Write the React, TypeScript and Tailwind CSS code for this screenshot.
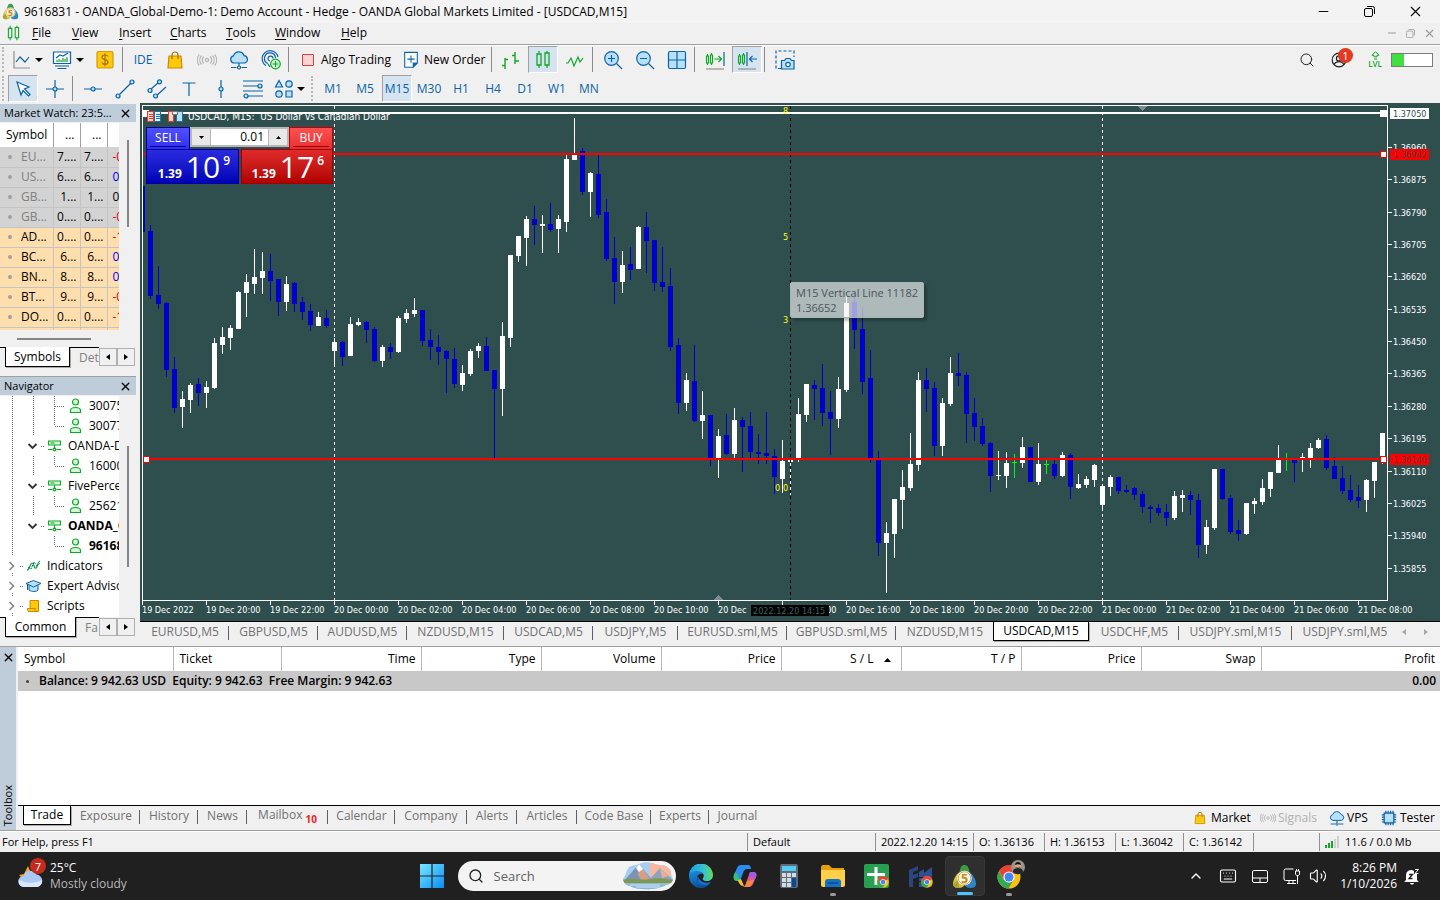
import React from "react";
import { Search, X, Minus, ChevronUp, Keyboard, Volume2 } from "lucide-react";

type Kids = { children?: React.ReactNode };

/* ---------- shared icons ---------- */

const BLUE = "#0a64a4";
const GREEN = "#10a827";

function Ico({ children, size = 20 }: Kids & { size?: number }) {
  return (
    <svg width={size} height={size} viewBox="0 0 20 20" fill="none" stroke={BLUE} strokeWidth="1.2" aria-hidden="true" className="shrink-0">
      {children}
    </svg>
  );
}

function MetaLogo({ size }: { size: number }) {
  return (
    <svg width={size} height={size} viewBox="0 0 24 24" aria-hidden="true" className="shrink-0">
      <path d="M12 1c2.500 0 3.500 1.500 4.200 4l1.300 5h-11l1.300-5C8.500 2.500 9.500 1 12 1z" fill="#3f9a48" />
      <path d="M7 8c-3 2-6 7-6 11 0 3 2 4 5 4 3 0 6-1 6-4V9z" fill="#d8c340" />
      <path d="M17 8c3 2 6 7 6 11 0 3-2 4-5 4-3 0-6-1-6-4V9z" fill="#2f86c5" />
      <path d="M6 15c-2 1-4 3-5 5 1 3 4 3 6 3z" fill="#a9a336" />
      <circle cx="12" cy="13.500" r="7" fill="#fff" />
      <circle cx="12" cy="13.500" r="6" fill="#fdf6e3" stroke="#c9962e" strokeWidth="0.8" />
      <text x="12" y="17.800" textAnchor="middle" fontSize="12" fontWeight="700" fontFamily="Open Sans, sans-serif" fill="#c18a1c">5</text>
    </svg>
  );
}

const BagIcon = ({ size = 20 }: { size?: number }) => (
  <Ico size={size}>
    <path d="M4 6h12l1 12H3z" fill="#ffc90e" stroke="#c98a00" />
    <path d="M7 9V5a3 3 0 0 1 6 0v4" stroke="#a86f00" />
  </Ico>
);
const SignalIcon = ({ size = 20 }: { size?: number }) => (
  <Ico size={size}>
    <g stroke="#b4b4b4">
      <circle cx="10" cy="10" r="1.600" />
      <path d="M6.800 6.500a5 5 0 0 0 0 7M13.200 6.500a5 5 0 0 1 0 7M4.500 5.500a7 7 0 0 0 0 9M15.500 5.500a7 7 0 0 1 0 9M2.300 4.500a9 9 0 0 0 0 11M17.700 4.500a9 9 0 0 1 0 11" />
    </g>
  </Ico>
);
const CloudIcon = ({ size = 20 }: { size?: number }) => (
  <Ico size={size}>
    <path d="M5 13a3.600 3.600 0 0 1-.5-7.100 5.500 5.500 0 0 1 10.500-.2A3.700 3.700 0 0 1 15.500 13z" fill="#b9e0fb" />
    <path d="M10 13v3M2 17.500h5.500M12.500 17.500H18" />
    <circle cx="10" cy="17.500" r="1.500" />
  </Ico>
);
const CandlesIcon = ({ size = 20 }: { size?: number }) => (
  <Ico size={size}>
    <g stroke={GREEN} strokeWidth="1.300">
      <path d="M6 1v3M6 15v3M14 1v2M14 15v3" />
      <path d="M4 4h4v11H4zM12 3h4v12h-4z" />
    </g>
  </Ico>
);

/* ---------- toolbar pieces ---------- */

function Tool({ label, active, children, cls = "w-8" }: Kids & { label: string; active?: boolean; cls?: string }) {
  if (active) {
    return (
      <button type="button" aria-label={label} aria-pressed="true" className="mx-px flex h-[27px] w-[30px] shrink-0 items-center justify-center border border-t-[#a0a0a0] border-r-white border-b-white border-l-[#a0a0a0] bg-[#d6e4f2] text-[#0a64a4]">
        {children}
      </button>
    );
  }
  return (
    <button type="button" aria-label={label} className={`flex h-[27px] shrink-0 items-center justify-center text-[#0a64a4] ${cls}`}>
      {children}
    </button>
  );
}
const Sep = () => <span className="mx-[1px] h-[25px] w-[2px] shrink-0 border-l border-[#8c8c8c]" />;
const Caret = () => (
  <svg width="8" height="4" viewBox="0 0 8 4" aria-hidden="true" className="shrink-0"><path d="M0 0h8L4 4z" fill="#000" /></svg>
);
const Grip = () => <span className="h-[25px] w-[3px] shrink-0 border-l-[2px] border-dotted border-[#b8b8b8]" />;

function ToolbarTop() {
  return (
    <div className="flex h-[29px] items-center pl-[2px]">
      <Grip />
      <Tool label="Chart type" cls="ml-[3px] w-7">
        <Ico><path d="M2 1v17h16" stroke="#909090" /><path d="M4 12l4-5 5 5 4-5" /></Ico>
      </Tool>
      <button type="button" aria-label="Chart type list" className="-ml-px w-2"><Caret /></button>
      <Tool label="Templates" cls="ml-[5px] w-7">
        <Ico>
          <path d="M1.500 2h17v11.500H1.500z" fill="#fff" /><path d="M3 16h14M5.500 18.500h9" />
          <path d="M4 8l4-3 3 1 5-3" /><path d="M5 12v-2M7 12V9M9 12v-2M11 12V8M13 12V9M15 12V7" stroke={GREEN} />
        </Ico>
      </Tool>
      <button type="button" aria-label="Template list" className="w-2"><Caret /></button>
      <Tool label="Trade" cls="ml-[5px] w-8">
        <Ico>
          <rect x="2" y="1.500" width="16" height="16.500" rx="1.500" fill="#ffc90e" stroke="#d49a00" />
          <path d="M13 6.500c-.6-1.200-1.600-1.500-3-1.500-1.800 0-3 .8-3 2.200 0 3.200 6 1.600 6 4.800 0 1.500-1.200 2.300-3 2.300-1.500 0-2.700-.5-3-1.800M10 3.300v13" stroke="#a87400" />
        </Ico>
      </Tool>
      <Sep />
      <Tool label="IDE" cls="ml-[2px] w-8"><span>IDE</span></Tool>
      <Tool label="Market"><BagIcon /></Tool>
      <Tool label="Signals"><SignalIcon /></Tool>
      <Tool label="VPS"><CloudIcon /></Tool>
      <Tool label="Network">
        <Ico>
          <path d="M5 15.500A8 8 0 1 1 17 7M7 13.500A5.500 5.500 0 1 1 14.500 8M9 11a2.500 2.500 0 1 1 3-2.500M7 14l2 3" />
          <circle cx="14.500" cy="14" r="4.800" fill="#d6f7dc" stroke={GREEN} /><path d="M14.500 11v6M11.500 14h6" stroke={GREEN} />
        </Ico>
      </Tool>
      <Sep />
      <button type="button" className="flex h-7 w-[106px] shrink-0 items-center gap-[7px] pl-[11px]">
        <span className="h-[12px] w-[12px] rounded-[1px] border border-[#e03c3c] bg-[#fcd5d0]" />Algo Trading
      </button>
      <button type="button" className="flex h-7 w-[93px] shrink-0 items-center gap-1 whitespace-nowrap pl-[5px]">
        <Ico size={18}><path d="M3 1.500h14v12L12.500 18H3z" fill="#fff" /><path d="M12.500 18v-4.500H17" fill={BLUE} /><path d="M10 5v8M6 9h8" /></Ico>
        New Order
      </button>
      <Sep />
      <Tool label="Bars" cls="ml-px w-8">
        <Ico><path d="M4 8v11M1 15.500h3M4 9.500h3M14 2v12M11 5.500h3M14 11h4" stroke={GREEN} strokeWidth="1.400" /></Ico>
      </Tool>
      <Tool label="Candlesticks" active><CandlesIcon /></Tool>
      <Tool label="Line"><Ico><path d="M1 13h2l3-5 3 8 4-9 2 5 3-4" stroke={GREEN} /></Ico></Tool>
      <Sep />
      <Tool label="Zoom in" cls="ml-[2px] w-8">
        <Ico><circle cx="8.500" cy="8.500" r="6.800" fill="#b9e0fb" /><path d="M13.500 13.500L19 19M5 8.500h7M8.500 5v7" /></Ico>
      </Tool>
      <Tool label="Zoom out">
        <Ico><circle cx="8.500" cy="8.500" r="6.800" fill="#b9e0fb" /><path d="M13.500 13.500L19 19M5 8.500h7" /></Ico>
      </Tool>
      <Tool label="Tile windows">
        <Ico><rect x="1.500" y="1.500" width="17" height="17" rx="1.500" fill="#b9e0fb" /><path d="M10 1.500v17M1.500 10h17" /></Ico>
      </Tool>
      <Sep />
      <Tool label="Auto scroll" cls="ml-[2px] w-8">
        <Ico>
          <path d="M1.500 6h2v7h-2zM5.500 5h2v8h-2zM2.500 4v2M2.500 13v2M6.500 3v2M6.500 13v2M9.500 9h7M13.500 6l3 3-3 3" stroke={GREEN} /><path d="M19 2v14" /><path d="M1 19h18" stroke="#909090" />
        </Ico>
      </Tool>
      <Tool label="Chart shift" active>
        <Ico>
          <path d="M1.500 6h2v7h-2zM5.500 5h2v8h-2zM2.500 4v2M2.500 13v2M6.500 3v2M6.500 13v2" stroke={GREEN} /><path d="M10 2v14M12.500 9H20M15.500 6l-3 3 3 3" /><path d="M1 19h18" stroke="#909090" />
        </Ico>
      </Tool>
      <Sep />
      <Tool label="Screenshot" cls="ml-[2px] w-8">
        <Ico>
          <path d="M6 18.500H1V1h18v6" strokeDasharray="3 2" />
          <path d="M6.500 10.500h3l1.500-2h4l1.500 2h2.500v8.500H6.500z" fill="#b9e0fb" /><circle cx="13" cy="14.500" r="2.200" fill="#fff" />
        </Ico>
      </Tool>
      <div className="ml-auto flex items-center pr-[7px]">
        <button type="button" aria-label="Search" className="flex w-8 justify-center text-[#222]"><Search size={16} strokeWidth={1.5} /></button>
        <button type="button" aria-label="Profile" className="relative flex w-8 justify-center">
          <Ico size={16}>
            <g stroke="#222" strokeWidth="1.500"><circle cx="10" cy="10" r="8.500" /><circle cx="10" cy="8" r="3.200" /><path d="M4 16c1-3 3-4 6-4s5 1 6 4" /></g>
          </Ico>
          <span className="absolute -top-[4px] left-[15px] flex h-[15px] w-[15px] items-center justify-center rounded-full bg-[#e03a20] text-[11px] leading-none text-white">1</span>
        </button>
        <span className="ml-[4px] flex w-8 flex-col items-center text-[8px] leading-[8px] font-semibold text-[#10a827]">
          <svg width="9" height="9" viewBox="0 0 9 9" aria-hidden="true"><path d="M4.500 .7L8 4.300H6v1.500H3V4.300H1zM3 8h3" fill="none" stroke={GREEN} /></svg>
          LVL
        </span>
        <span className="flex h-[14px] w-[42px] border border-[#7a7a7a] bg-white"><span className="h-full w-[12px] bg-[#40e040]" /></span>
      </div>
    </div>
  );
}

const periods = ["M1", "M5", "M15", "M30", "H1", "H4", "D1", "W1", "MN"];

function ToolbarDraw() {
  return (
    <div className="flex h-[29px] items-center pl-[2px]">
      <Grip />
      <span className="w-[2px]" />
      <Tool label="Cursor" active><Ico><path d="M4 3l12 5-4.500 2L17 15.500 15.500 17 10 11.500 8 16z" fill="#fff" /></Ico></Tool>
      <Tool label="Crosshair"><Ico><path d="M10 1v7M10 12v7M1 10h7M12 10h7" /><circle cx="10" cy="10" r="2" fill="#b9e0fb" /></Ico></Tool>
      <Sep />
      <Tool label="Horizontal line" cls="ml-[2px] w-8"><Ico><path d="M1 10h7M12 10h7" /><circle cx="10" cy="10" r="2" fill="#b9e0fb" /></Ico></Tool>
      <Tool label="Trendline"><Ico><path d="M3.500 16.500l13-13" /><circle cx="3" cy="17" r="2" fill="#b9e0fb" /><circle cx="17" cy="3" r="2" fill="#b9e0fb" /></Ico></Tool>
      <Tool label="Channel"><Ico><path d="M3 11L12 3M9 17l10-9" /><circle cx="3" cy="11.500" r="2" fill="#b9e0fb" /><circle cx="12.500" cy="2.800" r="2" fill="#b9e0fb" /><circle cx="8.500" cy="17" r="2" fill="#b9e0fb" /></Ico></Tool>
      <Tool label="Text"><Ico><path d="M3.500 4h13M10 4v13" /></Ico></Tool>
      <Tool label="Vertical line"><Ico><path d="M10 1v7M10 12v7" /><circle cx="10" cy="10" r="2" fill="#b9e0fb" /></Ico></Tool>
      <Tool label="Fibonacci"><Ico><path d="M0 2h20M0 7h15M0 12h20M5 17h15" /><circle cx="17" cy="7" r="2" fill="#b9e0fb" /><circle cx="3" cy="17" r="2" fill="#b9e0fb" /></Ico></Tool>
      <Tool label="Shapes" cls="w-[30px]"><Ico><g fill="#b9e0fb"><path d="M5 1.500L8.500 8h-7z" /><circle cx="15" cy="5" r="3.200" /><circle cx="5" cy="15" r="3.200" /><path d="M12 12h6v6h-6z" /></g></Ico></Tool>
      <button type="button" aria-label="Shape list" className="-ml-[2px] w-2"><Caret /></button>
      <span className="w-[6px]" />
      <Grip />
      <span className="w-[3px]" />
      {periods.map((p) => (
        <Tool key={p} label={p} active={p === "M15"}>{p}</Tool>
      ))}
    </div>
  );
}

/* ---------- left side ---------- */

function PanelTitle({ children }: Kids) {
  return (
    <div className="flex h-[18px] shrink-0 items-center justify-between bg-[#bfcddb] pr-[4px] pl-1 text-[11px] whitespace-nowrap">
      <span>{children}</span>
      <button type="button" aria-label="Close panel"><X size={13} strokeWidth={2.5} /></button>
    </div>
  );
}

function SideTabs({ active, next, activeCls }: { active: string; next: string; activeCls: string }) {
  return (
    <div className="flex h-[21px] shrink-0">
      <span className="w-[5px] border-t border-black" />
      <button type="button" className={`h-[20px] shrink-0 border-x border-b border-black bg-white shadow-[1px_1px_0_#aaa] ${activeCls}`}>{active}</button>
      <button type="button" className="min-w-0 flex-1 overflow-hidden border-t border-black pl-[9px] text-left text-[#808080]">{next}</button>
      {[-1, 1].map((d) => (
        <button key={d} type="button" aria-label={d < 0 ? "Previous tab" : "Next tab"} className="mt-px flex h-[18px] w-[18px] shrink-0 items-center justify-center border border-[#b0b0b0] bg-[#f0f0f0]">
          <svg width="4" height="6" viewBox="0 0 4 6" aria-hidden="true"><path d={d < 0 ? "M4 0v6L0 3z" : "M0 0v6l4-3z"} /></svg>
        </button>
      ))}
      <span className="w-px" />
    </div>
  );
}

const quotes: [string, string, string, string, boolean][] = [
  ["EU...", "7....", "-0", "text-red-600", true],
  ["US...", "6....", "0.", "text-[#0000ff]", true],
  ["GB...", "1...", "0.", "text-black", true],
  ["GB...", "0....", "-0", "text-red-600", true],
  ["AD...", "0....", "-1", "text-red-600", false],
  ["BC...", "6...", "0.", "text-[#0000ff]", false],
  ["BN...", "8...", "0.", "text-[#0000ff]", false],
  ["BT...", "9...", "-0", "text-red-600", false],
  ["DO...", "0....", "-1", "text-red-600", false],
  ["", "", "", "", false],
];

function MarketWatch() {
  return (
    <section>
      <PanelTitle>Market Watch: 23:5...</PanelTitle>
      <div className="flex pt-px">
        <div className="h-[207px] w-[119px] shrink-0 overflow-hidden bg-white">
          <table className="w-[133px] table-fixed border-collapse">
            <colgroup><col className="w-[53px]" /><col className="w-[27px]" /><col className="w-[27px]" /><col className="w-[26px]" /></colgroup>
            <thead>
              <tr className="h-[24px]">
                <th className="border-r border-[#a0a0a0] pl-[6px] text-left font-normal">Symbol</th>
                <th className="border-r border-[#a0a0a0] pr-[5px] text-right font-normal">...</th>
                <th className="border-r border-[#a0a0a0] pr-[5px] text-right font-normal">...</th>
                <th aria-label="Change" />
              </tr>
            </thead>
            <tbody>
              {quotes.map(([s, v, c, col, off], i) => (
                <tr key={i} className={`h-[20px] ${off ? "bg-[#d3d3d3]" : "bg-[#ffdead]"}`}>
                  <td className={`border-r border-b border-[#c4c4c4] p-0 ${off ? "text-[#808080]" : ""}`}>
                    <span className="flex items-center pl-[8px] leading-[18px]"><span className="mr-[9px] h-[4px] w-[4px] rounded-full bg-[#a0a0a0]" />{s}</span>
                  </td>
                  <td className="border-r border-b border-[#c4c4c4] p-0 pr-[3px] text-right leading-[18px]">{v}</td>
                  <td className="border-r border-b border-[#c4c4c4] p-0 pr-[3px] text-right leading-[18px]">{v}</td>
                  <td className={`border-b border-[#c4c4c4] p-0 pl-[5px] leading-[18px] ${col}`}>{c}</td>
                </tr>
              ))}
            </tbody>
          </table>
        </div>
        <div className="flex-1 pt-[17px] pl-[8px]"><div className="h-[87px] w-[2px] bg-[#858585]" /></div>
      </div>
      <div className="flex h-[17px] items-center pl-[17px]"><div className="h-[2px] w-[74px] bg-[#858585]" /></div>
      <SideTabs active="Symbols" next="Det" activeCls="w-[65px]" />
    </section>
  );
}

type Cell = "v" | "elbow" | "last" | "blank" | "open" | "closed" | "server" | "user" | "ind" | "exp" | "scr";

function TreeCell({ kind }: { kind: Cell }) {
  return (
    <svg width="21" height="20" viewBox="0 0 21 20" fill="none" aria-hidden="true" className="shrink-0">
      {(kind === "v" || kind === "elbow") && <path d="M10.500 0v20" stroke="#707070" strokeDasharray="1 1" />}
      {kind === "last" && <path d="M10.500 0v10" stroke="#707070" strokeDasharray="1 1" />}
      {(kind === "elbow" || kind === "last") && <path d="M11 10.500h10" stroke="#707070" strokeDasharray="1 1" />}
      {kind === "open" && <><path d="M5.500 8l4 4 4-4" stroke="#333" strokeWidth="1.800" /><path d="M18 10.500h3" stroke="#707070" strokeDasharray="1 1" /></>}
      {kind === "closed" && <><path d="M7.500 6l4 4-4 4" stroke="#858585" strokeWidth="1.600" /><path d="M18 10.500h3M10.500 17v3" stroke="#707070" strokeDasharray="1 1" /></>}
      {kind === "server" && <g stroke={GREEN} strokeWidth="1.200"><path d="M4.500 5h12v4h-12z" fill="#d6f7dc" /><path d="M6.500 7h4M10.500 9v4M4 13.500h4.500M12.500 13.500H17" /><circle cx="10.500" cy="13.500" r="1.400" /></g>}
      {kind === "user" && <g stroke={GREEN} strokeWidth="1.200" fill="#d6f7dc"><circle cx="10.500" cy="6" r="3" /><path d="M5.500 16.500v-2c0-2 2-3 5-3s5 1 5 3v2z" /></g>}
      {kind === "ind" && <><path d="M4 14c3 0 3-7 5-7s2 6 4 5 1-6 4-7" stroke={GREEN} strokeWidth="1.200" /><path d="M5 11l3 2 3-7 3 4 3-3" stroke={BLUE} strokeDasharray="2 1" /></>}
      {kind === "exp" && <g stroke={BLUE} fill="#b9e0fb"><path d="M6 8v6c3 2 7 2 9 0V8" /><path d="M3 7.500L10.500 4.500 18 7.500l-7.500 3.500zM4.500 8v6" /></g>}
      {kind === "scr" && <g stroke="#c98a00" fill="#ffc90e"><path d="M7 4.500h8.500v11H7z" /><path d="M4.500 12.500h8c-1 1-1 3 1 3H6c-1.500 0-1.500-1.500-1.500-3z" /></g>}
    </svg>
  );
}

const tree: { cells: Cell[]; label: string; bold?: boolean }[] = [
  { cells: ["v", "v", "elbow", "user"], label: "3007521" },
  { cells: ["v", "v", "last", "user"], label: "3007734" },
  { cells: ["v", "open", "server"], label: "OANDA-Demo-1" },
  { cells: ["v", "v", "last", "user"], label: "1600042" },
  { cells: ["v", "open", "server"], label: "FivePercent" },
  { cells: ["v", "v", "last", "user"], label: "2562180" },
  { cells: ["v", "open", "server"], label: "OANDA_Global", bold: true },
  { cells: ["v", "blank", "last", "user"], label: "9616831", bold: true },
  { cells: ["closed", "ind"], label: "Indicators" },
  { cells: ["closed", "exp"], label: "Expert Advisors" },
  { cells: ["closed", "scr"], label: "Scripts" },
];

function Navigator() {
  return (
    <section className="mt-[8px] border-t border-[#a0a0a0]">
      <PanelTitle>Navigator</PanelTitle>
      <div className="flex pt-px">
        <ul className="h-[221px] w-[119px] shrink-0 overflow-hidden bg-white pl-[2px]">
          {tree.map((n, i) => (
            <li key={i} className={`flex h-[20px] items-center whitespace-nowrap ${n.bold ? "font-bold" : ""}`}>
              {n.cells.map((c, j) => <TreeCell key={j} kind={c} />)}
              <span className="pl-[3px]">{n.label}</span>
            </li>
          ))}
        </ul>
        <div className="flex-1 pt-[50px] pl-[8px]"><div className="h-[121px] w-[2px] bg-[#858585]" /></div>
      </div>
      <SideTabs active="Common" next="Fa" activeCls="w-[71px]" />
    </section>
  );
}

/* ---------- chart ---------- */

/* w = up, b = down, g = unchanged; then high, body top, body bottom, low */
const bars =
  "b179,186,232,232 b225,231,296,299 b266,295,304,309 b302,303,370,377 b357,369,408,413 w391,399,407,428 w383,385,400,413 b378,384,393,406 w381,387,393,408 w338,343,388,389 " +
  "w327,337,345,354 w325,328,338,350 w291,292,329,329 w274,282,293,317 w249,277,284,294 w252,271,278,294 b254,271,281,301 b279,279,302,316 w276,284,302,311 b282,283,304,312 " +
  "b297,302,312,320 b304,311,325,331 w312,317,326,326 b310,318,326,328 w338,342,351,366 b341,342,357,366 w317,324,356,356 w318,322,325,326 b321,322,330,343 b327,329,361,362 " +
  "w345,347,361,367 b343,347,352,359 w316,318,352,353 w309,313,319,323 w298,310,314,317 b310,310,341,346 b329,340,347,360 b335,347,352,365 b350,351,359,393 b348,359,384,388 " +
  "w365,373,385,391 w349,351,374,376 w343,346,351,358 b337,346,371,371 b370,370,389,458 w322,336,389,416 w255,255,338,347 w236,236,256,262 w216,219,238,266 b206,219,225,245 " +
  "w215,224,226,253 b203,224,230,232 w215,219,229,253 w155,159,222,232 w118,154,160,160 b148,151,192,195 w172,173,192,217 b155,174,215,218 b199,212,259,261 b237,258,282,304 " +
  "w251,265,282,293 b247,264,270,280 w226,227,269,269 b212,227,241,273 b240,240,283,291 b247,282,287,292 b268,286,347,351 b338,345,403,414 w373,380,403,411 b345,381,421,422 " +
  "w391,415,421,439 b415,415,458,466 w429,436,458,478 b414,435,454,455 w408,420,454,458 b417,420,427,472 b412,426,452,458 b434,452,454,464 b412,453,456,464 b449,456,477,494 " +
  "w440,461,479,493 w458,460,462,495 w398,414,458,462 w384,384,415,422 b380,385,389,420 b364,388,413,426 b391,412,419,455 w377,389,419,428 w295,303,390,392 b292,302,330,349 " +
  "b307,329,382,394 b350,378,458,463 b451,460,543,556 w522,533,543,593 w499,499,534,558 w470,487,500,529 w433,464,488,491 w372,380,465,471 b368,380,389,412 b382,388,446,456 " +
  "w398,403,446,456 w357,373,404,406 b353,373,376,386 b372,375,414,443 b398,413,427,441 b418,426,444,446 b442,443,476,492 w451,475,476,480 w452,463,476,488 g454,462,463,478 " +
  "w437,447,463,468 b447,447,482,482 w443,464,482,485 g460,464,465,474 b460,464,476,479 w452,455,476,477 b453,455,487,499 w474,484,488,489 w476,479,485,488 w464,465,480,487 " +
  "w484,486,505,508 w475,477,487,496 b477,477,491,494 b485,490,492,493 b487,488,495,500 b491,494,507,513 b505,507,509,523 b504,508,513,516 b504,512,518,526 w491,496,518,520 " +
  "w490,495,498,512 b491,495,500,515 b494,500,545,558 w520,527,545,554 w469,469,528,530 b469,469,499,500 b495,498,532,534 b520,530,534,541 w503,503,534,535 w498,501,504,514 " +
  "w479,488,502,505 w472,472,489,497 w445,458,473,473 g453,458,459,471 b458,460,463,482 w453,457,459,472 w443,448,459,468 w438,440,448,449 b435,439,468,470 b457,466,479,479 " +
  "b466,478,491,494 b475,490,500,502 b485,497,501,508 w479,480,500,512 w462,462,481,498 w433,433,458,464";

const tone: Record<string, string> = { w: "#ffffff", b: "#0000cd", g: "#00ff00" };
const candles = bars.split(" ").map((s, i) => {
  const [h, t, b, l] = s.slice(1).split(",").map(Number);
  return { x: 142 + 8 * i, h, t, b, l, fill: tone[s[0]] };
});

const times = ["19 Dec 2022", "19 Dec 20:00", "19 Dec 22:00", "20 Dec 00:00", "20 Dec 02:00", "20 Dec 04:00", "20 Dec 06:00", "20 Dec 08:00", "20 Dec 10:00", "20 Dec", "20 Dec 14:00", "20 Dec 16:00", "20 Dec 18:00", "20 Dec 20:00", "20 Dec 22:00", "21 Dec 00:00", "21 Dec 02:00", "21 Dec 04:00", "21 Dec 06:00", "21 Dec 08:00"];
const prices: [string, number][] = [["1.36960", 147], ["1.36875", 179], ["1.36790", 212], ["1.36705", 244], ["1.36620", 276], ["1.36535", 309], ["1.36450", 341], ["1.36365", 373], ["1.36280", 406], ["1.36195", 438], ["1.36110", 471], ["1.36025", 503], ["1.35940", 535], ["1.35855", 568]];

function PriceChart() {
  return (
    <svg viewBox="140 103 1300 518" preserveAspectRatio="xMinYMin slice" className="block h-[518px] w-full bg-[#2f4f4f] font-['DejaVu_Sans_Condensed','DejaVu_Sans',sans-serif]" fontSize="9" role="img" aria-label="USDCAD M15 candlestick chart" shapeRendering="crispEdges">
      <clipPath id="plot"><rect x="143" y="106" width="1244" height="494" /></clipPath>
      <path d="M334.500 106v494M1102.500 106v494" stroke="#fff" strokeDasharray="3 3" />
      <g clipPath="url(#plot)">
        {candles.map((c) => (
          <g key={c.x} fill={c.fill}>
            <rect x={c.x} y={c.h} width="1" height={c.l - c.h} />
            <rect x={c.x - 2} y={c.t} width="5" height={Math.max(1, c.b - c.t)} />
          </g>
        ))}
      </g>
      <path d="M790.500 106v494" stroke="#000" strokeDasharray="3 3" />
      <path d="M142.500 105.500h1245v495h-1245z" fill="none" stroke="#fff" />
      <rect x="143" y="112" width="1244" height="2" fill="#fff" />
      <path d="M143 110h6v7h-6zM1380 110h7v7h-7z" fill="#fff" />
      <rect x="143" y="153" width="1244" height="2" fill="#f00" />
      <rect x="143" y="458" width="1244" height="2" fill="#f00" />
      <path d="M143.500 456.500h6v6h-6zM1380.500 456.500h6v6h-6zM1380.500 151.500h6v6h-6z" fill="#fff" stroke="#f00" />
      <path d="M1137 106h10l-5 5zM713 600h10l-5-5z" fill="#7b8a99" />
      <g fill="#ff0">
        <text x="783" y="114">8</text><text x="783" y="240">5</text><text x="783" y="323">3</text>
        <text x="775" y="491">0</text><text x="783" y="491">0</text>
      </g>
      <text x="188" y="120" fill="#fff" fontSize="10" xmlSpace="preserve">USDCAD, M15:  US Dollar vs Canadian Dollar</text>
      <g>
        <path d="M147.500 111.500h6v10h-6z" fill="#fcd5d0" stroke="#d9402f" /><path d="M154.500 111.500h6v10h-6z" fill="#e3f3ff" stroke="#1f6fb0" />
        <path d="M149 114.500h4M149 116.500h4M149 118.500h4" stroke="#d9402f" /><path d="M156 114.500h4M156 116.500h4M156 118.500h4" stroke="#1f6fb0" />
        <path d="M168.500 111.500h5v10h-5z" fill="#fcd5d0" stroke="#d9402f" /><path d="M176.500 111.500h6v10h-6z" fill="#b9e0fb" stroke="#1f6fb0" />
        <path d="M172.500 111.500h5v3h-5z" fill="#eee" stroke="#777" />
      </g>
      {times.map((t, i) => (
        <g key={i} fill="#fff"><rect x={142 + 64 * i} y="601" width="1" height="4" /><text x={142 + 64 * i} y="613">{t}</text></g>
      ))}
      <rect x="751" y="605" width="78" height="11" /><text x="753" y="614" fill="#3a6060">2022.12.20 14:15</text>
      {prices.map(([p, y]) => (
        <g key={p} fill="#fff"><rect x="1388" y={y} width="4" height="1" /><text x="1393" y={y + 4}>{p}</text></g>
      ))}
      <path d="M1390 108h39v11h-39z" fill="#fff" /><text x="1393" y="117" fill="#2f4f4f">1.37050</text>
      <path d="M1390 149h39v11h-39zM1390 454h39v11h-39z" fill="#f00" />
      <g fill="#5a3838"><text x="1393" y="158">1.36942</text><text x="1393" y="463">1.36140</text></g>
    </svg>
  );
}

function DealButton({ side, big, sup }: { side: "SELL" | "BUY"; big: string; sup: string }) {
  const sell = side === "SELL";
  return (
    <button type="button" aria-label={`${side} at 1.39${big}${sup}`} className={`flex h-[35px] items-end justify-end border pr-[8px] text-white ${sell ? "w-[93px] border-[#0000a0] bg-linear-to-b from-[#2a2ae0] to-[#0000b4]" : "w-[92px] border-[#a00000] bg-linear-to-b from-[#e02a2a] to-[#b00000]"}`}>
      <span className="mr-[4px] mb-[2px] text-[12px] leading-[14px] font-bold">1.39</span>
      <span className="text-[30px] leading-[33px]">{big}</span>
      <span className="mb-[15px] ml-[3px] text-[12px] leading-[14px] font-semibold">{sup}</span>
    </button>
  );
}

function QuickTrade() {
  return (
    <form className="absolute top-[24px] left-[6px] w-[187px]" onSubmit={(e) => e.preventDefault()}>
      <div className="flex h-[22px]">
        <button type="button" className="flex w-[44px] flex-col items-center border border-b-0 border-[#0000a0] bg-linear-to-b from-[#5050ff] to-[#3030e6] pt-[2px] text-white">SELL<span className="h-px w-[36px] bg-[#0000a0]" /></button>
        <div className="flex h-[20px] flex-1 border-2 border-[#b8b8b8] bg-white">
          <button type="button" aria-label="Decrease volume" className="flex w-[18px] items-center justify-center bg-[#e8e8e8]"><svg width="5" height="3" viewBox="0 0 5 3" aria-hidden="true"><path d="M0 0h5L2.500 3z" /></svg></button>
          <input aria-label="Volume" defaultValue="0.01" className="w-0 flex-1 border-x border-[#b8b8b8] bg-white pr-1 text-right outline-none" />
          <button type="button" aria-label="Increase volume" className="flex w-[18px] items-center justify-center bg-[#e8e8e8]"><svg width="5" height="3" viewBox="0 0 5 3" aria-hidden="true"><path d="M0 3h5L2.500 0z" /></svg></button>
        </div>
        <button type="button" className="flex w-[44px] flex-col items-center border border-b-0 border-[#c00000] bg-linear-to-b from-[#ff5050] to-[#e63030] pt-[2px] text-white">BUY<span className="h-px w-[36px] bg-[#a00000]" /></button>
      </div>
      <div className="flex justify-between">
        <DealButton side="SELL" big="10" sup="9" />
        <DealButton side="BUY" big="17" sup="6" />
      </div>
    </form>
  );
}

const chartTabs: [string, string][] = [
  ["EURUSD,M5", "w-[88px]"], ["GBPUSD,M5", "w-[89px]"], ["AUDUSD,M5", "w-[89px]"], ["NZDUSD,M15", "w-[97px]"], ["USDCAD,M5", "w-[89px]"],
  ["USDJPY,M5", "w-[85px]"], ["EURUSD.sml,M5", "w-[109px]"], ["GBPUSD.sml,M5", "w-[109px]"], ["NZDUSD,M15", "w-[98px]"], ["USDCAD,M15", "w-[96px]"],
  ["USDCHF,M5", "w-[89px]"], ["USDJPY.sml,M15", "w-[113px]"], ["USDJPY.sml,M5", "w-[106px]"],
];

function TabStrip({ tabs, active, children }: Kids & { tabs: [string, string][]; active: number }) {
  return (
    <div className="flex h-[24px] items-start whitespace-nowrap text-[#707070]">
      {tabs.map(([t, w], i) =>
        i === active ? (
          <button key={i} type="button" className={`h-[19px] shrink-0 border-x border-b border-black bg-white leading-[16px] text-black shadow-[1px_1px_0_#aaa] ${w}`}>{t}</button>
        ) : (
          <button key={i} type="button" className={`relative h-[20px] shrink-0 pl-[2px] leading-[16px] ${w}`}>
            {t === "Mailbox" ? <span className="flex justify-center gap-[3px]">Mailbox <span className="pt-[5px] text-[10px] leading-[14px] font-bold text-[#f02020]">10</span></span> : t}
            {i + 1 !== active && i + 1 < tabs.length && <span className="absolute top-[4px] -right-px h-[14px] w-px bg-[#606060]" />}
          </button>
        ),
      )}
      {children}
    </div>
  );
}

/* ---------- toolbox ---------- */

const columns: [string, string, boolean][] = [
  ["Symbol", "w-[155px]", false], ["Ticket", "w-[108px]", false], ["Time", "w-[140px]", true], ["Type", "w-[120px]", true], ["Volume", "w-[120px]", true], ["Price", "w-[120px]", true],
  ["S / L", "w-[120px]", true], ["T / P", "w-[120px]", true], ["Price", "w-[120px]", true], ["Swap", "w-[120px]", true], ["Profit", "", true],
];
const toolTabs: [string, string][] = [
  ["Trade", "w-[48px]"], ["Exposure", "w-[68px]"], ["History", "w-[58px]"], ["News", "w-[49px]"], ["Mailbox", "w-[81px]"], ["Calendar", "w-[67px]"],
  ["Company", "w-[72px]"], ["Alerts", "w-[50px]"], ["Articles", "w-[60px]"], ["Code Base", "w-[74px]"], ["Experts", "w-[58px]"], ["Journal", "w-[57px]"],
];

function Toolbox() {
  return (
    <section className="flex flex-1 border-y border-[#a0a0a0]">
      <div className="flex w-[16px] shrink-0 flex-col items-center justify-between bg-[#bfcddb] pt-[4px] pb-[4px]">
        <button type="button" aria-label="Close toolbox"><X size={13} strokeWidth={2.5} /></button>
        <span className="rotate-180 text-[11px] leading-[14px] [writing-mode:vertical-rl]">Toolbox</span>
      </div>
      <div className="ml-[2px] flex min-w-0 flex-1 flex-col">
        <div className="flex-1 bg-white">
          <table className="w-full table-fixed border-collapse">
            <colgroup>{columns.map(([, w], i) => <col key={i} className={w} />)}</colgroup>
            <thead>
              <tr className="h-[24px]">
                {columns.map(([c, , right], i) => (
                  <th key={i} className={`border-[#b8b8b8] font-normal ${right ? "pr-[5px] text-right" : "pl-[6px] text-left"} ${i < 10 ? "border-r" : ""}`}>
                    {c}
                    {c === "S / L" && <svg width="7" height="4" viewBox="0 0 7 4" aria-hidden="true" className="mr-[5px] ml-[10px] inline-block"><path d="M0 4h7L3.500 0z" /></svg>}
                  </th>
                ))}
              </tr>
            </thead>
            <tbody>
              <tr className="h-[20px] bg-[#c8c8c8] font-semibold">
                <td colSpan={10} className="whitespace-pre"><span className="flex items-center pl-[8px]"><span className="mr-[10px] h-[3px] w-[3px] rounded-full bg-[#444]" />Balance: 9 942.63 USD  Equity: 9 942.63  Free Margin: 9 942.63</span></td>
                <td className="pr-[4px] text-right">0.00</td>
              </tr>
            </tbody>
          </table>
        </div>
        <div className="border-t border-black pl-[5px]">
          <TabStrip tabs={toolTabs} active={0}>
            <div className="ml-auto flex h-[24px] items-center text-black">
              <button type="button" className="flex w-[67px] items-center gap-[4px]"><BagIcon size={14} />Market</button>
              <button type="button" className="flex w-[69px] items-center gap-[2px] text-[#b0b0b0]"><SignalIcon size={16} />Signals</button>
              <button type="button" className="flex w-[52px] items-center gap-[2px]"><CloudIcon size={16} />VPS</button>
              <button type="button" className="flex w-[59px] items-center gap-[3px]">
                <Ico size={16}><path d="M4 4h12v12H4z" fill="#b9e0fb" strokeWidth="1.500" /><path d="M6 4V1M9 4V1M12 4V1M15 4V1M6 19v-3M9 19v-3M12 19v-3M15 19v-3M4 6H1M4 9H1M4 12H1M4 15H1M19 6h-3M19 9h-3M19 12h-3M19 15h-3" strokeWidth="1.500" /></Ico>
                Tester
              </button>
            </div>
          </TabStrip>
        </div>
      </div>
    </section>
  );
}

const status: [string, string][] = [
  ["Default", "w-[128px]"], ["2022.12.20 14:15", "w-[98px]"], ["O: 1.36136", "w-[71px]"], ["H: 1.36153", "w-[71px]"], ["L: 1.36042", "w-[68px]"], ["C: 1.36142", "w-[70px]"], ["", "w-[66px]"],
];

function StatusBar() {
  return (
    <footer className="flex h-[21px] items-center border-t border-white text-[11px] whitespace-nowrap">
      <span className="flex-1 pl-[2px]">For Help, press F1</span>
      {status.map(([s, w], i) => <span key={i} className={`h-[18px] shrink-0 border-l border-[#909090] pl-[5px] leading-[18px] ${w}`}>{s}</span>)}
      <span className="flex h-[18px] w-[121px] shrink-0 items-center gap-[6px] border-l border-[#909090] pl-[5px]">
        <svg width="14" height="12" viewBox="0 0 14 12" aria-hidden="true"><path d="M0 9h2v3H0zM3 7h2v5H3zM6 5h2v7H6z" fill={GREEN} /><path d="M9 3h2v9H9zM12 0h2v12h-2z" fill="#d0d0d0" /></svg>
        11.6 / 0.0 Mb
      </span>
    </footer>
  );
}

/* ---------- desktop taskbar ---------- */

function Chrome({ x = 0, y = 0, s = 1 }: { x?: number; y?: number; s?: number }) {
  return (
    <g transform={`translate(${x} ${y}) scale(${s})`}>
      <circle cx="12" cy="12" r="11.500" fill="#fbc116" />
      <path d="M12 12L2 6.200A11.500 11.500 0 0 1 22 6.200z" fill="#ea4335" /><path d="M12 6.500h10.200A11.500 11.500 0 0 0 2 6.200l5 8z" fill="#ea4335" />
      <path d="M2 6.200A11.500 11.500 0 0 0 11.500 23.500L16.500 15l-9.400 0z" fill="#34a853" />
      <circle cx="12" cy="12" r="5.600" fill="#fff" /><circle cx="12" cy="12" r="4.500" fill="#4285f4" />
    </g>
  );
}

function TaskButton({ label, children, running, focused }: Kids & { label: string; running?: boolean; focused?: boolean }) {
  return (
    <button type="button" aria-label={label} className={`relative mx-[2px] flex h-10 w-10 items-center justify-center rounded-[4px] ${focused ? "border border-[#383838] bg-[#2f2f2f]" : ""}`}>
      {children}
      {(running || focused) && <span className={`absolute bottom-0 h-[3px] rounded-full ${focused ? "w-4 bg-[#4cc2ff]" : "w-[6px] bg-[#9a9a9a]"}`} />}
    </button>
  );
}

function Taskbar() {
  return (
    <nav className="flex h-12 items-center bg-[#202020] text-white">
      <div className="flex flex-1 items-center pl-[18px] text-[12px] leading-4">
        <span className="relative mr-[6px]">
          <svg width="26" height="28" viewBox="0 0 26 28" aria-hidden="true" className="block">
            <path d="M10 4l2 5 6 3-6 12-7-7-4-4 5-1z" fill="#f7a41d" />
            <path d="M6 25a5.500 5.500 0 0 1-.5-11 7 7 0 0 1 13-1.500A6.300 6.300 0 0 1 19 25z" fill="#a9c8f5" /><path d="M6 25a5.500 5.500 0 0 1-5-7c6 3 16 4 23 0a6 6 0 0 1-5 7z" fill="#d8e7ff" />
          </svg>
          <span className="absolute -top-[4px] left-[12px] flex h-4 w-4 items-center justify-center rounded-full bg-[#c42b1c] text-[11px] leading-none">7</span>
        </span>
        <span>25°C<br /><span className="text-[#b8b8b8]">Mostly cloudy</span></span>
      </div>
      <div className="flex items-center pl-3">
        <button type="button" aria-label="Start" className="mr-[14px] p-0">
          <svg width="24" height="24" viewBox="0 0 24 24" aria-hidden="true"><defs><linearGradient id="win" x1="0" y1="0" x2="1" y2="1"><stop offset="0" stopColor="#7ae8ff" /><stop offset="1" stopColor="#0a8cf5" /></linearGradient></defs><path d="M0 0h11.400v11.400H0zM12.600 0H24v11.400H12.600zM0 12.600h11.400V24H0zM12.600 12.600H24V24H12.600z" fill="url(#win)" /></svg>
        </button>
        <label className="mr-[3px] flex h-[30px] w-[218px] items-center overflow-hidden rounded-full bg-[#f3f3f3] pl-[10px] text-[#222]">
          <Search size={16} strokeWidth={2} />
          <input type="search" aria-label="Search" placeholder="Search" className="ml-[10px] w-0 flex-1 bg-transparent text-[13px] text-[#555] outline-none placeholder:text-[#606060]" />
          <svg width="52" height="28" viewBox="0 0 52 28" aria-hidden="true" className="mr-[2px]">
            <clipPath id="scene"><path d="M5 8c3-6 9-4 12-6 8-4 14 0 20 1 8 0 13 4 12 10 4 5 1 9-5 10-8 5-28 6-36 1C2 23-1 17 3 14z" /></clipPath>
            <g clipPath="url(#scene)">
              <path d="M0 0h52v28H0z" fill="#a6cdf2" /><path d="M28 0h24v14H28z" fill="#f7b8a0" />
              <path d="M2 19L17 2l14 17z" fill="#7d93b3" /><path d="M17 2l7 9 5 8h-9l-4-6z" fill="#d3a085" /><path d="M17 2l4 5-4 3-3-4z" fill="#fff" />
              <path d="M26 19L38 6l14 13z" fill="#8fa2bd" /><path d="M38 6l8 8-6 2z" fill="#e7b195" />
              <path d="M0 18c10-3 18 1 28-1s18 0 24 1v3H0z" fill="#7f9850" /><path d="M0 21h52v7H0z" fill="#8fb9dc" /><path d="M8 23h30M14 25h24" stroke="#cfe4f5" />
            </g>
          </svg>
        </label>
        <TaskButton label="Edge">
          <svg width="24" height="24" viewBox="0 0 24 24" aria-hidden="true">
            <defs>
              <linearGradient id="edge" x1="0" y1="0.300" x2="1" y2="0.300"><stop offset="0" stopColor="#1b9de2" /><stop offset="0.600" stopColor="#35c1d0" /><stop offset="1" stopColor="#5fdc5b" /></linearGradient>
              <linearGradient id="edge2" x1="0" y1="0" x2="0.400" y2="1"><stop offset="0" stopColor="#1b8fe0" /><stop offset="1" stopColor="#0d4f9e" /></linearGradient>
            </defs>
            <path d="M0 12A12 12 0 0 1 24 11c0 4-3 6-6 6-3 0-5-1-4-3 2-3 0-6-4-6C5 8 1 10 0 12z" fill="url(#edge)" />
            <path d="M0 12c0-3 4-5 8-5 3 0 5 1 6 3-3-1-6 1-6 4 0 5 6 8 13 5-2 3-5 5-9 5A12 12 0 0 1 0 12z" fill="url(#edge2)" />
            <path d="M9 12c-2 4 1 9 7 9 3 0 5-1 6-3-5 2-12 0-13-6z" fill="#1573c9" />
          </svg>
        </TaskButton>
        <TaskButton label="Copilot">
          <svg width="24" height="24" viewBox="0 0 24 24" aria-hidden="true">
            <path d="M8 1h7c2 0 3 2 3 4h-4c-2 0-3 1-4 4l-3 8H4c-3 0-4-3-3-6l3-7c1-2 2-3 4-3z" fill="#2a8df0" />
            <path d="M4 10l3 7h-3c-3 0-4-3-3-6l1-3z" fill="#35c46a" /><path d="M5 16l3-1 3 7c-3 0-4-1-6-5z" fill="#f6c02c" />
            <path d="M16 23H9c2 0 3-1 4-4l4-11h3c3 0 4 2 3 5l-3 7c-1 2-2 3-4 3z" fill="#e0559b" />
            <path d="M9 23h5c3 0 4-1 6-5l1-2-7 1c-1 4-2 6-5 6z" fill="#f58a3c" /><path d="M17 8h3c3 0 4 2 3 5l-1 2-6-3z" fill="#a25be0" />
          </svg>
        </TaskButton>
        <TaskButton label="Calculator">
          <svg width="20" height="26" viewBox="0 0 20 26" aria-hidden="true">
            <rect x="1" y="1" width="18" height="24" rx="2" fill="#5d6b7a" /><path d="M3 3h14v5H3z" fill="#56ccf2" />
            <path d="M3 10h4v4H3zM8 10h4v4H8zM13 10h4v4h-4zM3 15h4v4H3zM8 15h4v4H8zM3 20h4v4H3zM8 20h4v4H8z" fill="#d5dbe2" /><path d="M13 15h4v9h-4z" fill="#0a4a94" />
          </svg>
        </TaskButton>
        <TaskButton label="File Explorer" running>
          <svg width="26" height="24" viewBox="0 0 26 24" aria-hidden="true">
            <path d="M1 3c0-1 1-2 2-2h6l3 3h12v8H1z" fill="#e3a008" /><path d="M1 6h24v15c0 1-1 2-2 2H3c-1 0-2-1-2-2z" fill="#ffcf48" />
            <path d="M5 23v-5c0-2 1-3 3-3h10c2 0 3 1 3 3v5z" fill="#1273c4" /><path d="M8 18h10v2H8z" fill="#0b529b" />
          </svg>
        </TaskButton>
        <TaskButton label="Sheets">
          <svg width="25" height="25" viewBox="0 0 25 25" aria-hidden="true"><rect width="25" height="24" rx="2" fill="#28a052" /><path d="M10.500 3h3v18h-3zM3 9h18v3H3z" fill="#fff" /><Chrome x={13} y={12} s={0.5} /></svg>
        </TaskButton>
        <TaskButton label="Trading terminal">
          <svg width="25" height="25" viewBox="0 0 25 25" aria-hidden="true"><path d="M1 6l9-4v4L5 8v3l5-2v4l-5 2v8H1z" fill="#2a4580" /><path d="M11 8l5-3v4l8-6v20H11z" fill="#2f4f93" /><path d="M11 13.500h8M11 17.500h6" stroke="#202020" /><Chrome x={13} y={12} s={0.5} /></svg>
        </TaskButton>
        <TaskButton label="MetaTrader 5" focused><MetaLogo size={25} /></TaskButton>
        <TaskButton label="Chrome" running>
          <svg width="32" height="32" viewBox="0 0 32 32" aria-hidden="true"><Chrome x={4} y={5} /><circle cx="25" cy="7" r="7" fill="#99958c" /><path d="M20 12c0-3 2-4 5-4s5 1 5 4c-3 3-7 3-10 0z" fill="#1e2a30" /><circle cx="25" cy="6" r="3" fill="#d3a582" /><path d="M22 5c0-4 6-4 6 0-2-1-4-1-6 0z" fill="#111" /><path d="M22.500 7c1 3 4 3 5 0-1 1-4 1-5 0z" fill="#33231c" /></svg>
        </TaskButton>
      </div>
      <div className="flex flex-1 items-center justify-end pr-[20px]">
        <button type="button" aria-label="Hidden icons" className="flex w-8 justify-center"><ChevronUp size={16} /></button>
        <button type="button" aria-label="Keyboard" className="flex w-8 justify-center"><Keyboard size={18} strokeWidth={1.5} /></button>
        <button type="button" aria-label="Touchpad" className="flex w-8 justify-center">
          <svg width="16" height="13" viewBox="0 0 16 13" fill="none" stroke="#fff" aria-hidden="true"><rect x="0.500" y="0.500" width="15" height="12" rx="1.500" /><path d="M.5 8h15M8 8v4.500" /></svg>
        </button>
        <button type="button" aria-label="Network" className="flex w-8 justify-center">
          <svg width="18" height="17" viewBox="0 0 18 17" fill="none" stroke="#fff" aria-hidden="true"><path d="M10.500 1H2.500a1.500 1.500 0 0 0-1.500 1.500V11a1.500 1.500 0 0 0 1.500 1.500H13M4 15.500h9M6 12.500v3M10 12.500v3M14.500 7v9M12.500 3h4v3c0 1-1 1.500-2 1.500s-2-.5-2-1.500zM13.500 1v2M15.500 1v2" /></svg>
        </button>
        <button type="button" aria-label="Sound" className="flex w-5 justify-center"><Volume2 size={18} strokeWidth={1.5} /></button>
        <span className="ml-[12px] text-right text-[12px] leading-4">8:26 PM<br />1/10/2026</span>
        <button type="button" aria-label="Notifications" className="ml-[7px]">
          <svg width="16" height="17" viewBox="0 0 16 17" aria-hidden="true"><path d="M2 12V7a5 5 0 0 1 8-4v3h3v6l1.500 1.500v.5H.5v-.5zM6 15h4c-.5 2-3.500 2-4 0z" fill="#fff" /><path d="M5 6.500h3.500l-3.500 4h3.500" stroke="#202020" fill="none" strokeWidth="1.300" /><path d="M11 1.500h3.500l-3.500 4h3.500" stroke="#fff" fill="none" /></svg>
        </button>
      </div>
    </nav>
  );
}

/* ---------- window ---------- */

const menus: [string, string][] = [["File", "w-[40px]"], ["View", "w-[47px]"], ["Insert", "w-[51px]"], ["Charts", "w-[56px]"], ["Tools", "w-[49px]"], ["Window", "w-[66px]"], ["Help", "w-[40px]"]];

const Restore = ({ size }: { size: number }) => (
  <svg width={size} height={size} viewBox="0 0 11 11" fill="none" stroke="currentColor" aria-hidden="true"><rect x="0.500" y="2.500" width="8" height="8" rx="1.500" /><path d="M3 .5h5.500a2 2 0 0 1 2 2V8" /></svg>
);

export default function App() {
  return (
    <div className="flex min-h-screen flex-col overflow-hidden bg-[#f0f0f0] font-['Open_Sans','Noto_Sans',sans-serif] text-[12px] leading-[16px] text-black">
      <header className="flex h-[23px] items-center bg-[#f3f3f3] pl-[2px]">
        <MetaLogo size={17} />
        <h1 className="ml-[5px] flex-1 truncate">9616831 - OANDA_Global-Demo-1: Demo Account - Hedge - OANDA Global Markets Limited - [USDCAD,M15]</h1>
        <div className="flex items-center pr-[2px]">
          <button type="button" aria-label="Minimize" className="flex w-[45px] justify-center"><Minus size={15} strokeWidth={1.5} /></button>
          <button type="button" aria-label="Restore" className="flex w-[46px] justify-center"><Restore size={11} /></button>
          <button type="button" aria-label="Close" className="flex w-[46px] justify-center"><X size={17} strokeWidth={1.5} /></button>
        </div>
      </header>
      <div className="flex h-[22px] items-center border-b border-[#a0a0a0] pb-px pl-[5px] shadow-[0_1px_0_#fff]">
        <CandlesIcon size={17} />
        <div className="flex pl-[10px]">
          {menus.map(([m, w]) => <button key={m} type="button" className={`text-left ${w}`}><u className="underline-offset-2">{m[0]}</u>{m.slice(1)}</button>)}
        </div>
        <div className="ml-auto flex items-center pr-[1px] text-[#9a9a9a]">
          <button type="button" aria-label="Minimize chart" className="flex w-[19px] justify-center"><Minus size={12} /></button>
          <button type="button" aria-label="Restore chart" className="flex w-[19px] justify-center"><Restore size={9} /></button>
          <button type="button" aria-label="Close chart" className="flex w-[19px] justify-center"><X size={13} /></button>
        </div>
      </div>
      <ToolbarTop />
      <ToolbarDraw />
      <main className="flex">
        <aside className="w-[136px] shrink-0 pt-px"><MarketWatch /><Navigator /></aside>
        <div className="ml-[4px] min-w-0 flex-1 overflow-hidden">
          <div className="relative border-b border-black">
            <PriceChart />
            <QuickTrade />
            <div role="tooltip" className="absolute top-[179px] left-[650px] rounded-[2px] border border-[#a9b5b5] bg-[#f2f2f2]/65 px-[5px] py-[2px] text-[11px] leading-[15px] text-[#4b5560] shadow-[3px_3px_3px_rgba(0,0,0,0.25)]">
              M15 Vertical Line 11182<br />1.36652
            </div>
          </div>
          <TabStrip tabs={chartTabs} active={9}>
            <div className="ml-auto flex gap-[18px] pt-[7px] pr-[12px]">
              <button type="button" aria-label="Scroll tabs left"><svg width="4" height="6" viewBox="0 0 4 6" aria-hidden="true" className="block"><path d="M4 0v6L0 3z" fill="#a8a8a8" /></svg></button>
              <button type="button" aria-label="Scroll tabs right"><svg width="4" height="6" viewBox="0 0 4 6" aria-hidden="true" className="block"><path d="M0 0v6l4-3z" fill="#a8a8a8" /></svg></button>
            </div>
          </TabStrip>
        </div>
      </main>
      <Toolbox />
      <StatusBar />
      <Taskbar />
    </div>
  );
}
